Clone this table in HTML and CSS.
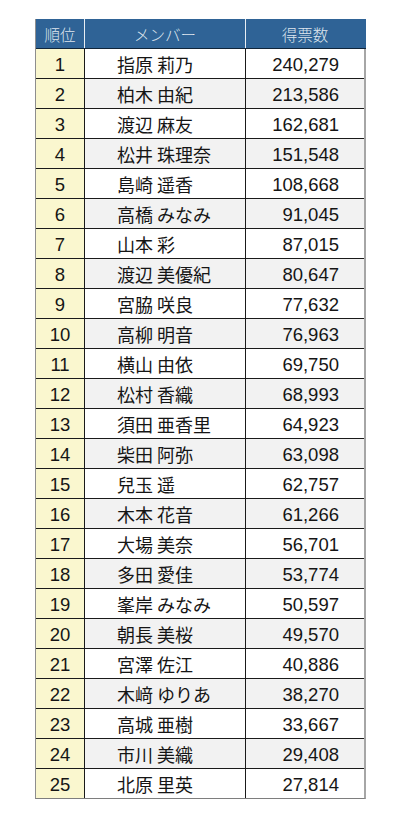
FILE: index.html
```html
<!DOCTYPE html>
<html lang="ja">
<head>
<meta charset="utf-8">
<title>得票数</title>
<link rel="stylesheet" href="styles.css">
</head>
<body>
<div class="sheet">
  <div class="row head">
    <div class="c rank">順位</div>
    <div class="c name">メンバー</div>
    <div class="c votes">得票数</div>
  </div>
  <div class="row"><div class="c rank">1</div><div class="c name">指原 莉乃</div><div class="c votes">240,279</div></div>
  <div class="row"><div class="c rank">2</div><div class="c name">柏木 由紀</div><div class="c votes">213,586</div></div>
  <div class="row"><div class="c rank">3</div><div class="c name">渡辺 麻友</div><div class="c votes">162,681</div></div>
  <div class="row"><div class="c rank">4</div><div class="c name">松井 珠理奈</div><div class="c votes">151,548</div></div>
  <div class="row"><div class="c rank">5</div><div class="c name">島崎 遥香</div><div class="c votes">108,668</div></div>
  <div class="row"><div class="c rank">6</div><div class="c name">高橋 みなみ</div><div class="c votes">91,045</div></div>
  <div class="row"><div class="c rank">7</div><div class="c name">山本 彩</div><div class="c votes">87,015</div></div>
  <div class="row"><div class="c rank">8</div><div class="c name">渡辺 美優紀</div><div class="c votes">80,647</div></div>
  <div class="row"><div class="c rank">9</div><div class="c name">宮脇 咲良</div><div class="c votes">77,632</div></div>
  <div class="row"><div class="c rank">10</div><div class="c name">高柳 明音</div><div class="c votes">76,963</div></div>
  <div class="row"><div class="c rank">11</div><div class="c name">横山 由依</div><div class="c votes">69,750</div></div>
  <div class="row"><div class="c rank">12</div><div class="c name">松村 香織</div><div class="c votes">68,993</div></div>
  <div class="row"><div class="c rank">13</div><div class="c name">須田 亜香里</div><div class="c votes">64,923</div></div>
  <div class="row"><div class="c rank">14</div><div class="c name">柴田 阿弥</div><div class="c votes">63,098</div></div>
  <div class="row"><div class="c rank">15</div><div class="c name">兒玉 遥</div><div class="c votes">62,757</div></div>
  <div class="row"><div class="c rank">16</div><div class="c name">木本 花音</div><div class="c votes">61,266</div></div>
  <div class="row"><div class="c rank">17</div><div class="c name">大場 美奈</div><div class="c votes">56,701</div></div>
  <div class="row"><div class="c rank">18</div><div class="c name">多田 愛佳</div><div class="c votes">53,774</div></div>
  <div class="row"><div class="c rank">19</div><div class="c name">峯岸 みなみ</div><div class="c votes">50,597</div></div>
  <div class="row"><div class="c rank">20</div><div class="c name">朝長 美桜</div><div class="c votes">49,570</div></div>
  <div class="row"><div class="c rank">21</div><div class="c name">宮澤 佐江</div><div class="c votes">40,886</div></div>
  <div class="row"><div class="c rank">22</div><div class="c name">木﨑 ゆりあ</div><div class="c votes">38,270</div></div>
  <div class="row"><div class="c rank">23</div><div class="c name">高城 亜樹</div><div class="c votes">33,667</div></div>
  <div class="row"><div class="c rank">24</div><div class="c name">市川 美織</div><div class="c votes">29,408</div></div>
  <div class="row"><div class="c rank">25</div><div class="c name">北原 里英</div><div class="c votes">27,814</div></div>
</div>
</body>
</html>
```

FILE: styles.css
```css
* { box-sizing: border-box; }
body {
  margin: 0;
  background: #ffffff;
  font-family: "Liberation Sans", Arial, "Noto Sans CJK JP", sans-serif;
  color: #151515;
}
.sheet {
  width: 331px;
  margin: 19px 0 0 35px;
  border-left: 1px solid #8e8e8e;
  border-right: 2px solid #a6a6a6;
  border-bottom: 1px solid #7e7e7e;
}
.row {
  display: grid;
  grid-template-columns: 49px 161px 1fr;
  height: 30px;
  border-bottom: 1px solid #1a1a1a;
  background: #ffffff;
}
.row:nth-child(odd) { background: #f2f2f2; }
.row:last-child { border-bottom: none; height: 29px; }
.c {
  display: flex;
  align-items: center;
  border-right: 1px solid #1a1a1a;
  font-size: 18.5px;
  padding-top: 2px;
}
.c.votes { border-right: none; justify-content: flex-end; padding-right: 25px; }
.c.rank { justify-content: center; background: #faf7cf; }
.c.name { padding-left: 32px; font-family: "Noto Sans CJK JP", sans-serif; font-size: 18px; padding-top: 1px; }

.row.head {
  background: #2f6396;
  height: 30px;
  border-bottom: 1px solid #10253a;
  margin-right: -2px;
}
.head .c {
  background: #2f6396;
  color: #dfe6ee;
  border-right: 1px solid #e8eef4;
  font-family: "Noto Sans CJK JP", sans-serif;
  font-weight: 300;
  font-size: 15.5px;
  justify-content: center;
  padding: 0;
}
.head .c.votes { border-right: none; padding-right: 2px; }
.head .c.name { padding-left: 0; }
```
